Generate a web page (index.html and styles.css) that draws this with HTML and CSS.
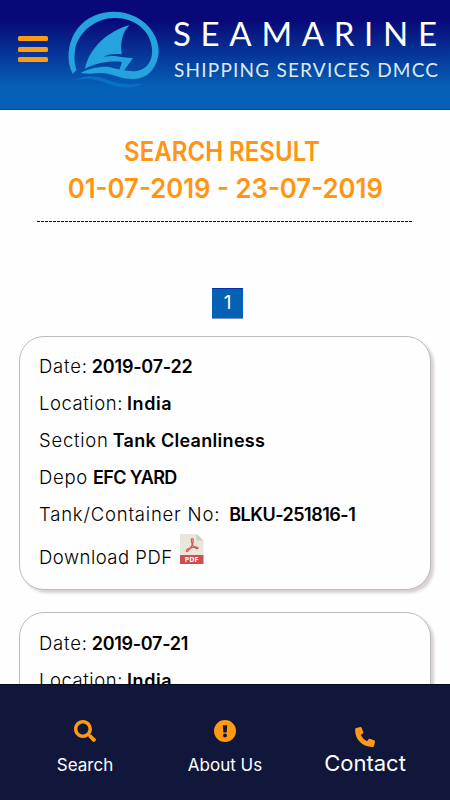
FILE: index.html
```html
<!DOCTYPE html>
<html lang="en">
<head>
<meta charset="utf-8">
<meta name="viewport" content="width=device-width, initial-scale=1">
<title>Seamarine Shipping Services</title>
<link rel="stylesheet" href="styles.css">
</head>
<body>
<div class="app">
  <header class="header">
    <button class="menu" aria-label="Menu"><i></i><i></i><i></i></button>
    <svg class="logo" width="376" height="84" viewBox="66 8 376 84">
      <path fill="#24a3df" d="M72.800 73.800C66 62 67 42 78 28C92 11 117 7.500 136 17C153 26 161 43 158 57C155 71 146 79 133 79C119 79 111 72 98 73C92 74 86 74 80.500 73C90 68 102 66 109 67C118 69 128 72 137 71C148 69 153 59 152 49C151 31 135 18 115 18C96 18 80 31 75.500 47C74 56 74 63 76.500 70Z"/>
      <path fill="#24a3df" d="M129.500 25C122 33 120 43 121.800 54.300C115 53.800 109 54 103.500 56.800C111 55.500 116 56.200 123 57.200L133 58.300L124 70.500L119.500 69.500L122 62C110 60.500 97 62.500 85 68.800C89 48 108 31 129.500 25Z"/>
      <path fill="#0870c6" d="M74 81C83 75 94 75 105 79C117 84 131 86 144 83C135 89 121 89 108 84C96 79 85 77 74 81Z"/>
      <text class="brand" x="173" y="46" textLength="264">SEAMARINE</text>
      <text class="tagline" x="174" y="76.500" textLength="264">SHIPPING SERVICES DMCC</text>
    </svg>
  </header>
  <main class="content">
    <h1 class="title"><span class="t1">SEARCH RESULT</span><span class="t2">01-07-2019 - 23-07-2019</span></h1>
    <div class="rule"></div>
    <div class="pager"><span>1</span></div>
    <section class="card">
      <p><span class="date">Date:</span><b class="dateval">2019-07-22</b></p>
      <p><span class="location">Location:</span><b class="india">India</b></p>
      <p><span class="section">Section</span><b class="tank">Tank Cleanliness</b></p>
      <p><span class="depo">Depo</span><b class="yard">EFC YARD</b></p>
      <p><span class="container">Tank/Container No:</span><b class="number">BLKU-251816-1</b></p>
      <p class="download"><span class="dl">Download PDF</span>
        <svg class="pdf" width="24" height="30" viewBox="0 0 24 30">
          <path fill="#e8e7dc" d="M0 0H16.500L23.500 6.500V22H0Z"/><path fill="#cfcec0" d="M16.500 0V6.500H23.500Z"/>
          <path fill="#d24b50" d="M0 21H23.500V30H0Z"/>
          <path fill="none" stroke="#d4595c" stroke-width="1.300" d="M11.500 5C14 3.500 13.500 8 12 11C10 15 8 18 6.500 17.500C5 16 11 13 15 13C19 13 18.500 15.500 16 14.500C13 13 10.500 8 11.500 5Z"/>
          <text x="4.800" y="28.200" textLength="13.500">PDF</text>
        </svg></p>
    </section>
    <section class="card next">
      <p><span class="date">Date:</span><b class="dateval2">2019-07-21</b></p>
      <p><span class="location">Location:</span><b class="india">India</b></p>
    </section>
  </main>
  <nav class="nav">
    <a class="n1"><svg width="22" height="22" viewBox="0 0 512 512"><path d="M505 442.700L405.300 343c-4.500-4.500-10.600-7-17-7H372c27.600-35.300 44-79.700 44-128C416 93.100 322.900 0 208 0S0 93.100 0 208s93.100 208 208 208c48.300 0 92.700-16.400 128-44v16.300c0 6.400 2.500 12.500 7 17l99.700 99.700c9.400 9.400 24.600 9.400 33.900 0l28.300-28.300c9.400-9.400 9.400-24.600.1-34zM208 336c-70.700 0-128-57.200-128-128 0-70.700 57.200-128 128-128 70.700 0 128 57.200 128 128 0 70.700-57.200 128-128 128z"/></svg><span>Search</span></a>
    <a class="n2"><svg width="22" height="22" viewBox="0 0 22 22"><path fill-rule="evenodd" d="M11 0A11 11 0 1 0 11 22A11 11 0 1 0 11 0ZM8.800 5.300H13.200L12.700 12.500H9.300ZM11 13.500A2 2 0 1 1 11 17.500A2 2 0 1 1 11 13.500Z"/></svg><span>About Us</span></a>
    <a class="n3"><svg width="20" height="20" viewBox="0 0 20 20"><path d="M1.200 .9L5.300 0Q6.100-.1 6.400.6L8.300 5Q8.500 5.700 8 6.200L5.700 8.100A15 15 0 0 0 11.900 14.300L13.800 12Q14.300 11.500 15 11.700L19.400 13.600Q20.100 13.900 20 14.700L19.100 18.800Q18.900 19.900 17.800 19.900Q9 19.700 4.500 14.600Q.1 10 .1 2.200Q.1 1.200 1.200.9Z"/></svg><span>Contact</span></a>
  </nav>
</div>
</body>
</html>
```
FILE: styles.css
```css
* { box-sizing: border-box; }
body { margin: 0; font-family: Inter, "Liberation Sans", sans-serif; background: #fefefe; color: #000; }
.app { height: 800px; display: flex; flex-direction: column; overflow: hidden; }
.header { height: 110px; flex: none; display: flex; align-items: flex-start; border-bottom: 1px solid #034294; background: linear-gradient(#080878 0, #080878 18%, #0561b5 80%, #0561b5 100%); }
.menu { margin: 36px 0 0 18px; padding: 0; width: 30px; border: 0; background: none; display: flex; flex-direction: column; gap: 5.500px; }
.menu i { height: 5px; border-radius: 1.500px; background: #ff9a14; }
.logo { margin: 8px 0 0 18px; flex: none; }
.brand { font: 400 33px Lato, sans-serif; fill: #fff; }
.tagline { font: 400 19px Lato, sans-serif; fill: #dceaf7; }
.content { flex: 1; min-height: 0; overflow: hidden; }
.title { margin: 0; padding-top: 23px; display: flex; flex-direction: column; align-items: center; font-size: 27px; line-height: 37px; font-weight: 600; color: #ff9512; white-space: nowrap; }
.t1 { margin-right: 6px; transform: scaleX(.89); }
.t2 { transform: scaleX(.953); }
.rule { margin: 13.500px 37px 0; height: 1px; background: repeating-linear-gradient(90deg, #0a1238 0 3px, transparent 3px 4px); }
.pager { display: flex; justify-content: center; padding: 66px 0 17px; }
.pager span { width: 31px; height: 31px; margin-left: 5px; background: #0561b5; border-top: 1px solid #0631a5; border-bottom: 1px solid #7a91cc; color: #fff; font-size: 19px; line-height: 27px; text-align: center; }
.card { margin: 0 19px 22px; height: 254px; padding: 11px 19px; border: 1px solid #bbb; border-radius: 25px; background: #fefefe; box-shadow: 3px 3px 3px #d8d0d3; }
.next { padding-top: 12px; }
.card p { margin: 0; height: 37px; line-height: 37px; font-size: 18.500px; display: flex; white-space: pre; font-weight: 300; }
.card b { font-size: 18px; font-weight: 600; margin-left: 4px; }
.date { letter-spacing: .8px; }
.location { letter-spacing: .55px; }
.section { letter-spacing: .75px; }
.depo { letter-spacing: .7px; }
.container { letter-spacing: .8px; }
.dl { letter-spacing: .5px; }
.dateval { letter-spacing: -.2px; }
.dateval2 { letter-spacing: -.3px; }
.india { letter-spacing: .6px; }
.tank { letter-spacing: .3px; }
.card .yard { letter-spacing: -.6px; margin-left: 5px; }
.number { letter-spacing: -.5px; }
.card .number { margin-left: 9px; }
.card .download { height: 49px; line-height: 49px; }
.pdf { margin: 1px 0 0 7px; }
.pdf text { font: 700 7px "Open Sans", sans-serif; fill: #fff; }
.nav { height: 116px; flex: none; border-top: 1px solid #05081e; background: #11173b; display: grid; grid-template-columns: 170px 110px 170px; color: #fff; }
.nav a { display: flex; flex-direction: column; align-items: center; padding-top: 35px; font-size: 17px; line-height: 24px; }
.nav svg { fill: #ff9a14; margin-bottom: 11px; }
.nav .n3 { padding-top: 42px; font-size: 22px; }
.nav .n3 svg { margin-bottom: 4px; }
```
